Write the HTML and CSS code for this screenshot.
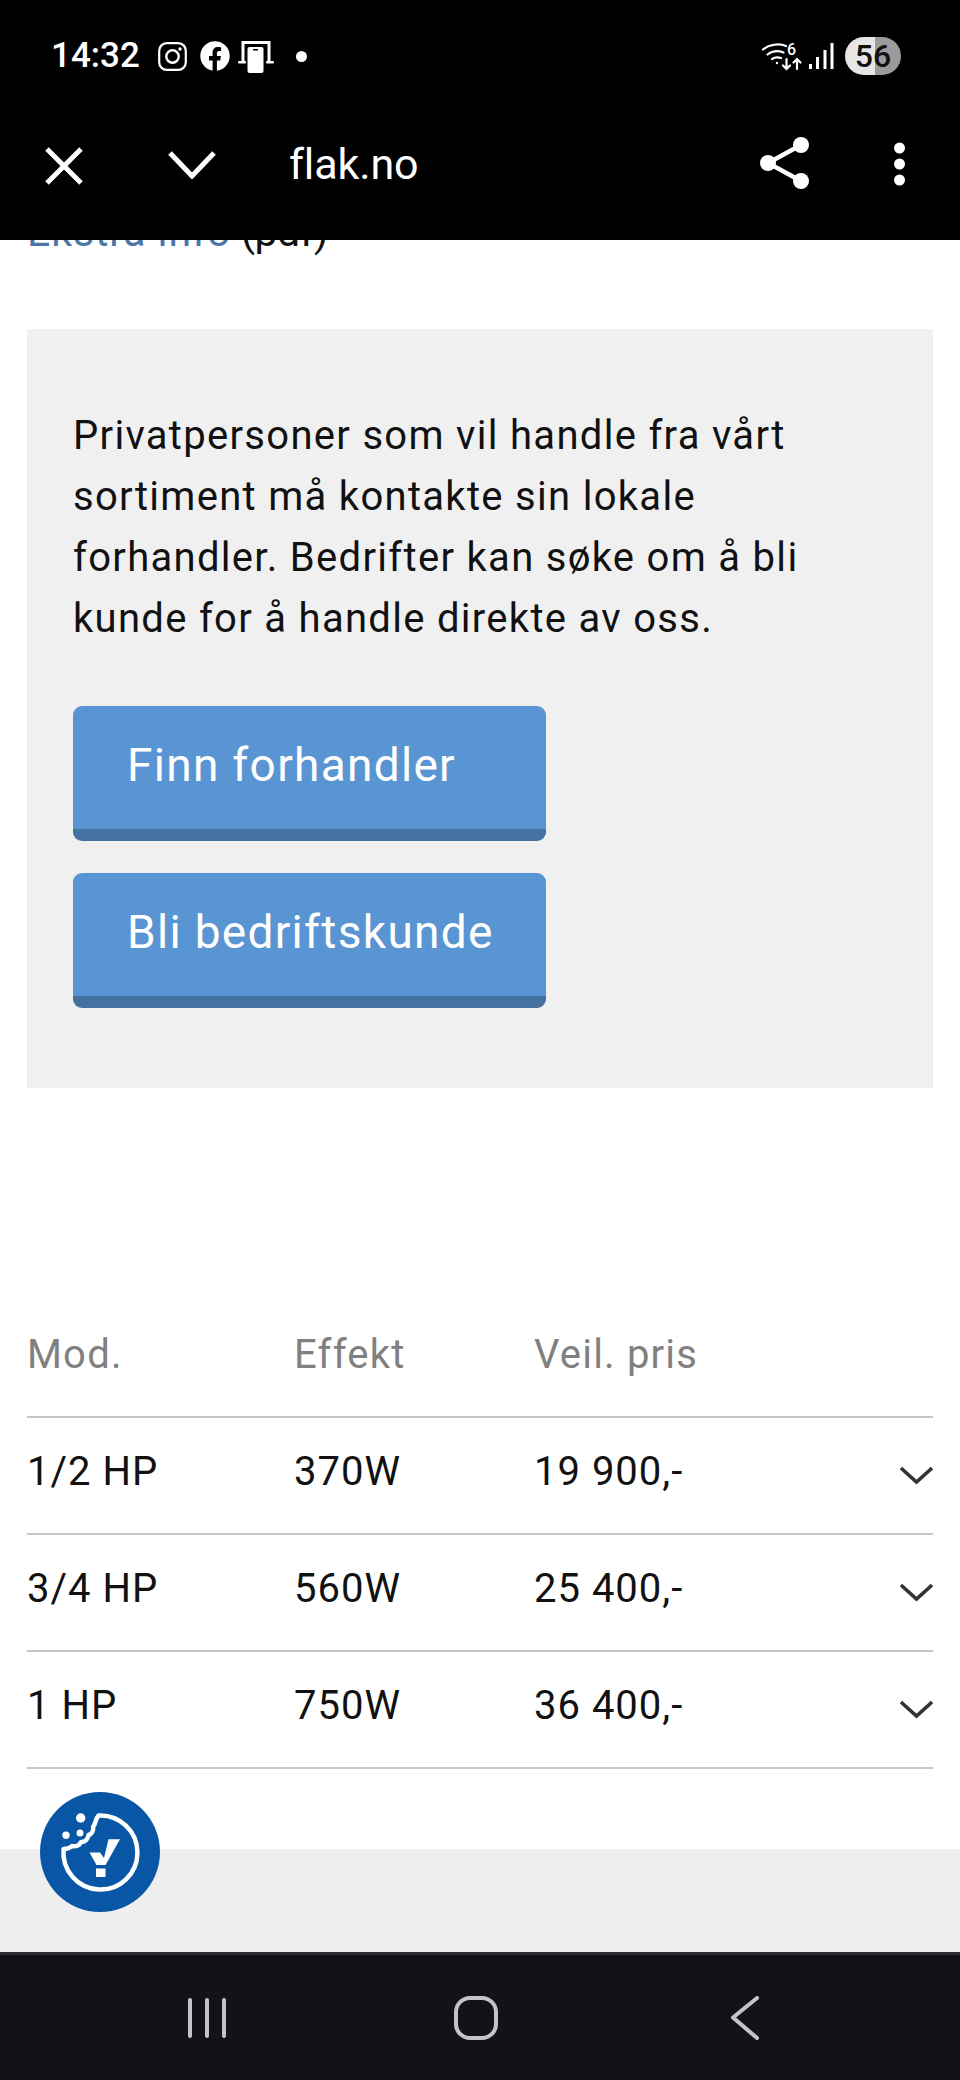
FILE: index.html
```html
<!DOCTYPE html>
<html lang="no">
<head>
<meta charset="utf-8">
<title>flak.no</title>
<link rel="stylesheet" href="styles.css">
</head>
<body>
<div class="phone">
  <header class="top">
    <div class="status">
      <div class="status-left">
        <span class="time">14:32</span>
        <svg class="ic-insta" width="29" height="29" viewBox="0 0 29 29" fill="none" stroke="#fff"><rect x="1.2" y="1.2" width="26.6" height="26.6" rx="7.5" stroke-width="2.2"/><circle cx="14.5" cy="14.5" r="6.2" stroke-width="2.4"/><circle cx="22" cy="7" r="1.7" fill="#fff" stroke="none"/></svg>
        <svg class="ic-fb" width="30" height="30" viewBox="0 0 30 30"><circle cx="15" cy="15" r="14.7" fill="#fff"/><path d="M12.6 30V19.4H9V15h3.6v-3.3c0-3.7 2.2-5.7 5.5-5.7 1.6 0 3 .3 3 .3v3.700h-1.800c-1.800 0-2.400 1.100-2.400 2.300V15h4l-.7 4.400h-3.300V30z" fill="#000"/></svg>
        <svg class="ic-dex" width="36" height="32" viewBox="0 0 36 32" fill="#fff"><path d="M3.500 0h29v21h-3V3h-23v18h-3z"/><rect x="0" y="20" width="8" height="2.400" rx="1"/><rect x="28" y="20" width="8" height="2.400" rx="1"/><rect x="9.500" y="6" width="16" height="26" rx="2"/><rect x="15" y="8" width="5" height="1.500" fill="#000"/></svg>
        <span class="dot"></span>
      </div>
      <div class="status-right">
        <svg class="ic-wifi" width="40" height="29" viewBox="0 0 40 29" fill="none" stroke="#fff" stroke-width="2.200" stroke-linecap="round"><path d="M1 7.500C7 2.500 17 1 24 4"/><path d="M5.500 12.500C10 9 16 8.500 21.500 10.500"/><path d="M10 17C13 15 16 15 19 16"/><circle cx="15" cy="21" r="1.200" fill="#fff" stroke="none"/><path d="M24.500 17v10M21 23.500l3.500 3.500 3.500-3.500M35 27V17M31.500 20.500 35 17l3.500 3.500"/><text class="wifi-six" x="25" y="13">6</text></svg>
        <svg class="ic-signal" width="25" height="26" viewBox="0 0 25 26" fill="#fff"><rect x="0" y="21" width="3" height="5"/><rect x="7" y="14" width="3" height="12"/><rect x="14.500" y="7" width="3" height="19"/><rect x="21.500" y="0" width="3" height="26"/></svg>
        <span class="battery">56</span>
      </div>
    </div>
    <div class="toolbar">
      <svg class="ic-close" width="38" height="38" viewBox="0 0 38 38" stroke="#fff" stroke-width="5" fill="none"><path d="M2 2l34 34M36 2 2 36"/></svg>
      <svg class="ic-down" width="48" height="28" viewBox="0 0 48 28" stroke="#fff" stroke-width="5" fill="none"><path d="M2 2l22 23L46 2"/></svg>
      <span class="domain">flak.no</span>
      <svg class="ic-share" width="50" height="54" viewBox="0 0 50 54" fill="#fff" stroke="#fff"><path d="M42 9 9 27l33 18" fill="none" stroke-width="4.500"/><circle cx="42" cy="9" r="8" stroke="none"/><circle cx="9" cy="27" r="8" stroke="none"/><circle cx="42" cy="45" r="8" stroke="none"/></svg>
      <svg class="ic-more" width="11" height="44" viewBox="0 0 11 44" fill="#fff"><circle cx="5.500" cy="6" r="5.500"/><circle cx="5.500" cy="22" r="5.500"/><circle cx="5.500" cy="38" r="5.500"/></svg>
    </div>
  </header>

  <main class="content">
    <p class="extra"><a class="extra-link">Ekstra info</a> (pdf)</p>
    <section class="card">
      <p class="card-text">Privatpersoner som vil handle fra vårt sortiment må kontakte sin lokale forhandler. Bedrifter kan søke om å bli kunde for å handle direkte av oss.</p>
      <div class="buttons">
        <a class="btn">Finn forhandler</a>
        <a class="btn">Bli bedriftskunde</a>
      </div>
    </section>
    <section class="table">
      <div class="row head"><span>Mod.</span><span>Effekt</span><span>Veil. pris</span><span></span></div>
      <div class="row"><span>1/2 HP</span><span>370W</span><span>19 900,-</span><svg class="chev" width="33" height="19" viewBox="0 0 35 20" fill="none" stroke="#333" stroke-width="3.800"><path d="M1 2l16.500 15L34 2"/></svg></div>
      <div class="row"><span>3/4 HP</span><span>560W</span><span>25 400,-</span><svg class="chev" width="33" height="19" viewBox="0 0 35 20" fill="none" stroke="#333" stroke-width="3.800"><path d="M1 2l16.500 15L34 2"/></svg></div>
      <div class="row"><span>1 HP</span><span>750W</span><span>36 400,-</span><svg class="chev" width="33" height="19" viewBox="0 0 35 20" fill="none" stroke="#333" stroke-width="3.800"><path d="M1 2l16.500 15L34 2"/></svg></div>
    </section>
  </main>

  <div class="footer"></div>

  <nav class="nav">
    <svg class="nav-recent" width="38" height="40" viewBox="0 0 38 40" fill="none" stroke="#c4c4c4" stroke-width="4" stroke-linecap="round"><path d="M2 2v36M19 2v36M36 2v36"/></svg>
    <svg class="nav-home" width="44" height="44" viewBox="0 0 44 44" fill="none" stroke="#c4c4c4" stroke-width="4"><rect x="2" y="2" width="40" height="40" rx="14"/></svg>
    <svg class="nav-back" width="28" height="44" viewBox="0 0 28 44" fill="none" stroke="#c4c4c4" stroke-width="4" stroke-linecap="round" stroke-linejoin="round"><path d="M26 2 2 21.500 26 42"/></svg>
  </nav>

  <button class="cookie" aria-label="Cookies">
    <svg width="120" height="120" viewBox="0 0 120 120"><circle cx="60" cy="60" r="60" fill="#0a56a6"/><path d="M58.500 23.600A37 37 0 1 1 23.600 57C27 57 30 56 32 54C36 55 40 53 41 50C45 50 48 47 48.500 43C52 42 54 38 53 35C56 32 55 27 58.500 23.600z" fill="none" stroke="#fff" stroke-width="4.500" stroke-linejoin="round"/><circle cx="40.700" cy="26" r="4.700" fill="#fff"/><circle cx="40" cy="41" r="3.500" fill="#fff"/><circle cx="26" cy="43.300" r="3.700" fill="#fff"/><path d="M49.500 60.500H60L64 66 68.500 47.300H80L65.500 73H56.500z" fill="#fff"/><rect x="56" y="76.500" width="9.500" height="8.500" fill="#fff"/></svg>
  </button>
</div>
</body>
</html>
```

FILE: styles.css
```css
* { box-sizing: border-box; }
html, body { margin: 0; padding: 0; background: #fff; }
.phone {
  position: relative;
  width: 960px;
  height: 2080px;
  overflow: hidden;
  display: flex;
  flex-direction: column;
  font-family: Roboto, "Liberation Sans", sans-serif;
  color: #111;
}
.top { background: #000; color: #fff; height: 240px; flex: none; position: relative; z-index: 1; }
.status { height: 112px; display: flex; justify-content: space-between; align-items: flex-start; padding: 37px 59px 0 51px; }
.status-left { display: flex; align-items: center; height: 38px; }
.time { font-size: 35px; font-weight: 500; width: 107px; line-height: 38px; }
.ic-fb { margin-left: 13px; }
.ic-dex { margin-left: 8px; margin-top: 2px; }
.dot { width: 11px; height: 11px; border-radius: 50%; background: #fff; margin-left: 22px; }
.status-right { display: flex; align-items: center; height: 38px; }
.ic-wifi { overflow: visible; }
.ic-signal { margin-left: 7px; }
.wifi-six { font: 500 16px Roboto, sans-serif; fill: #fff; stroke: none; }
.battery {
  width: 56px; height: 38px; margin-left: 11px; border-radius: 19px;
  background: linear-gradient(90deg, #e6e6e6 0 54%, #9b9b9b 54% 100%);
  color: #111; font-size: 32px; font-weight: 500; line-height: 38px; text-align: center;
}
.toolbar { height: 128px; display: flex; align-items: center; padding: 0 0 0 45px; position: relative; }
.ic-close { margin-top: -20px; }
.ic-down { margin-left: 85px; margin-top: -22px; }
.domain { margin-left: 73px; font-size: 43px; line-height: 48px; margin-top: -24px; letter-spacing: -.1px; }
.ic-share { margin-left: auto; margin-top: -26px; }
.ic-more { margin-left: 85px; margin-right: 55px; margin-top: -24px; }

.content { flex: 1; min-height: 0; overflow: hidden; padding: 0 27px; }
.extra { margin: -38px 0 0; font-size: 41px; line-height: 61px; height: 61px; letter-spacing: -.5px; }
.extra-link { color: #4a76a8; letter-spacing: .9px; }
.card { margin-top: 66px; background: #f0f0f1; padding: 76px 46px 80px; }
.card-text { margin: 0; font-size: 40px; line-height: 61px; letter-spacing: 1.300px; color: #111; width: 760px; }
.buttons { display: flex; flex-direction: column; gap: 32px; margin-top: 57px; }
.btn {
  display: block; width: 473px; height: 135px; border-radius: 9px;
  background: #5a95d3; border-bottom: 12px solid #44719f;
  color: #fff; font-size: 46px; line-height: 118px; padding-left: 54px; letter-spacing: 1.300px;
}
.table { margin-top: 243px; }
.row {
  display: grid; grid-template-columns: 267px 240px 1fr 33px; align-items: center;
  height: 117px; padding-bottom: 8px; border-bottom: 2px solid #c6c6c6;
  font-size: 40px; letter-spacing: 1px; color: #111;
}
.row .chev { margin-top: 7px; }
.head { height: 87px; padding-bottom: 0; align-items: start; color: #808080; letter-spacing: 1.200px; }
.footer { height: 103px; flex: none; background: #eee; }
.nav {
  height: 128px; flex: none; background: #121318; border-top: 3px solid #2b2c31; position: relative;
  display: flex; align-items: center; padding-left: 188px;
}
.nav-home { margin-left: 228px; }
.nav-back { margin-left: 233px; }
.cookie { position: absolute; left: 40px; top: 1792px; width: 120px; height: 120px; padding: 0; border: 0; background: none; }
.cookie svg { display: block; }
```
